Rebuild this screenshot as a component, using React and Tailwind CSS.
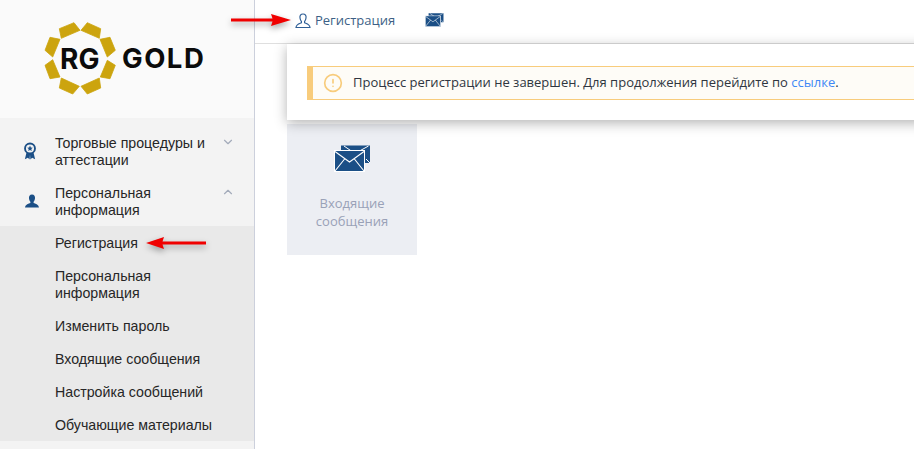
import React from "react";
import { ChevronDown, ChevronUp, CircleAlert } from "lucide-react";

const Mail = ({ className }) => (
  <svg viewBox="0 0 37 27" className={className}>
    <path d="M7 0.5H36V18H31V5.5H7Z" fill="#1b4f86" />
    <path d="M10 1L21 8.5L34.5 1" fill="none" stroke="#fff" strokeWidth="1" />
    <path d="M32 14L36 18" stroke="#fff" strokeWidth="1" />
    <rect x="0.5" y="5.5" width="30" height="21" fill="#1b4f86" stroke="#fff" strokeWidth="1" />
    <path d="M1 6.5L15.5 17L30 6.5M1 26L11 13.5M30 26L20 13.5" fill="none" stroke="#fff" strokeWidth="1.1" />
  </svg>
);

const Ring = () => (
  <svg viewBox="44 25 72 73" className="w-[72px] h-[73px] shrink-0">
    <g fill="#cca40e" stroke="#cca40e" strokeWidth="0.8">
      <polygon points="59.3,31.7 74,25.7 80,33.3 61.3,41.3" />
      <polygon points="81,33.3 87.3,25.7 100.7,31.7 99.3,41.3" />
      <polygon points="100,42.3 110,40.3 115.3,53.3 107.3,60" />
      <polygon points="107.3,63.3 115.3,68.3 110,81.7 100.3,80" />
      <polygon points="99.3,81 100.7,91 87.3,97 81,89.3" />
      <polygon points="79.3,89.3 72.7,97 59.3,91 61.3,81" />
      <polygon points="60,80 50,81.7 45,68.3 52.7,62.7" />
      <polygon points="52.7,60 45,53.3 50,40.3 60,42.3" />
    </g>
    <text x="60" y="71.7" fontFamily="Inter, sans-serif" fontWeight="700" fontSize="28" fill="#0b0b0b">RG</text>
  </svg>
);

const Arrow = ({ className, left }) => (
  <svg viewBox="0 0 60 14" className={`absolute w-[60px] h-[14px] drop-shadow-[0_3px_3px_rgba(0,0,0,0.35)] ${className}`}>
    {left ? (
      <path d="M0 7L18 1L16.5 5.5H60V8.5H16.5L18 13Z" fill="#f00000" />
    ) : (
      <path d="M60 7L40 1L41.5 5.5H0V8.5H41.5L40 13Z" fill="#f00000" />
    )}
  </svg>
);

const sub = ["Регистрация", "Персональная информация", "Изменить пароль", "Входящие сообщения", "Настройка сообщений", "Обучающие материалы"];

export default function App() {
  return (
    <div className="relative flex w-[914px] h-[449px] overflow-hidden bg-white font-['Open_Sans',sans-serif]">
      <aside className="w-[255px] shrink-0 h-full border-r border-[#ccd0dc] bg-[#f3f3f3] font-['Liberation_Sans',sans-serif] text-[14.2px] leading-[17px] text-[#262626]">
        <div className="h-[118px] bg-[#fafafa] flex items-center pl-[44px] pb-[1px] gap-[6px]">
          <Ring />
          <span className="font-['Inter',sans-serif] font-bold text-[27.5px] tracking-[1.5px] text-[#0b0b0b] leading-none">GOLD</span>
        </div>
        <nav className="pt-2">
          <div className="flex items-start pt-[9px] pb-[7px] pl-[23px] pr-[19px] h-[50px]">
            <svg viewBox="0 0 16 21" className="w-[14px] h-[18px] mt-[7px] mr-[18px] shrink-0">
              <path d="M4 12L2 20L5.5 18.5L7.5 20.5L8 15L8.5 20.5L10.5 18.5L14 20L12 12Z" fill="#1b4f86" />
              <circle cx="8" cy="7.5" r="5.8" fill="#f3f3f3" stroke="#1b4f86" strokeWidth="2.2" />
              <path d="M8 4.2L9 6.5L11.3 6.7L9.5 8.2L10.1 10.6L8 9.3L5.9 10.6L6.5 8.2L4.7 6.7L7 6.5Z" fill="#1b4f86" />
            </svg>
            <span className="flex-1">Торговые процедуры и аттестации</span>
            <ChevronDown className="w-[14px] h-[14px] text-[#a3abba] shrink-0" strokeWidth={2} />
          </div>
          <div className="flex items-start pt-[9px] pb-[7px] pl-[25px] pr-[19px] h-[50px]">
            <svg viewBox="0 0 14 14" className="w-[14px] h-[14px] mt-[9px] mr-[16px] shrink-0">
              <path d="M7 0.5C9.3 0.5 10.3 2.3 10 4.5C9.8 6 9.2 7.2 8.6 7.8V9C10.5 9.8 13.5 10.3 14 13.5H0C0.5 10.3 3.5 9.8 5.4 9V7.8C4.8 7.2 4.2 6 4 4.5C3.7 2.3 4.7 0.5 7 0.5Z" fill="#1b4f86" />
            </svg>
            <span className="flex-1">Персональная информация</span>
            <ChevronUp className="w-[14px] h-[14px] text-[#a3abba] shrink-0" strokeWidth={2} />
          </div>
          <ul className="bg-[#e9e9e9]">
            {sub.map((s) => (
              <li key={s} className="pt-[9px] pb-[7px] pl-[55px] pr-[25px]">{s === "Персональная информация" ? <>Персональная<br />информация</> : s}</li>
            ))}
          </ul>
        </nav>
      </aside>
      <main className="flex-1 min-w-0">
        <header className="h-[44px] border-b border-[#dfdfdf] flex items-center pl-[40px] text-[13px] text-[#3d5f86]">
          <svg viewBox="0 0 16 16" className="w-[16px] h-[16px] mr-[4px] mb-[2px] shrink-0" fill="none" stroke="#2f5f96" strokeWidth="1.2">
            <path d="M8 1C10.3 1 11.4 2.8 11 5C10.8 6.6 10.1 7.8 9.6 8.3V9.8C11.5 10.6 14.6 10.8 15 14.5H1C1.4 10.8 4.5 10.6 6.4 9.8V8.3C5.9 7.8 5.2 6.6 5 5C4.6 2.8 5.7 1 8 1Z" />
          </svg>
          <span className="mb-[1px]">Регистрация</span>
          <Mail className="w-[19px] h-[14px] ml-[30px] mb-[3px]" />
        </header>
        <div className="px-8">
          <section className="relative z-10 w-[640px] h-[76px] bg-white shadow-[0_3px_12px_rgba(0,0,0,0.3)] pt-[22px] pl-5">
            <div className="w-[640px] h-[34px] flex items-center bg-[#fefcf7] border border-l-[6px] border-[#f8cc7c] pl-[10px] text-[13px] text-[#2f3640]">
              <CircleAlert className="w-[20px] h-[20px] text-[#f8cc7c] mr-[10px] shrink-0" strokeWidth={2} />
              <span className="whitespace-nowrap">Процесс регистрации не завершен. Для продолжения перейдите по <a className="text-[#3f88f5]">ссылке</a>.</span>
            </div>
          </section>
          <div className="mt-1 w-[130px] h-[131px] bg-[#eceef3] flex flex-col items-center pt-[21px] text-[13px] leading-[18px] text-[#99a1b7] text-center">
            <Mail className="w-[37px] h-[27px]" />
            <span className="mt-[22px]">Входящие<br />сообщения</span>
          </div>
        </div>
      </main>
      <Arrow className="left-[231px] top-[13px]" />
      <Arrow left className="left-[146px] top-[236px]" />
      <Arrow left className="left-[843px] top-[76px]" />
    </div>
  );
}
